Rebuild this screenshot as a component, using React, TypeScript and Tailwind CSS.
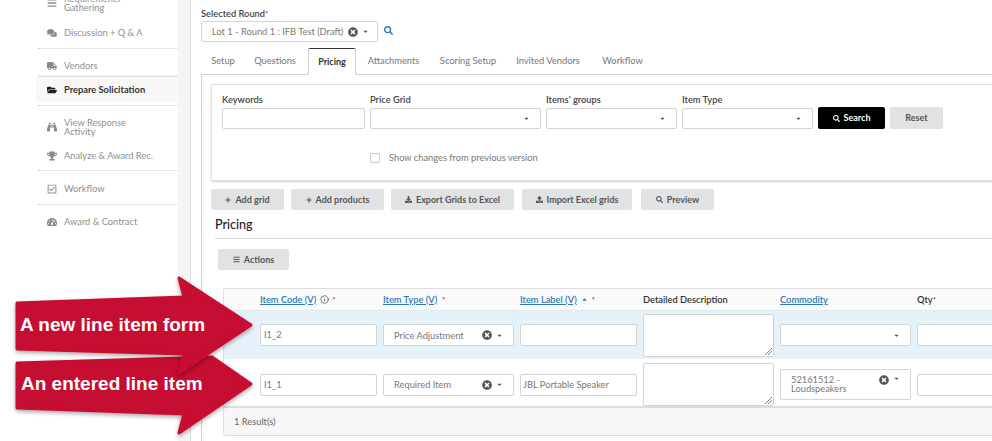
import React from "react";
import { FaBars, FaComments, FaTruck, FaFolderOpen, FaBinoculars, FaTrophy, FaRegCheckSquare, FaTachometerAlt, FaSearch, FaTimesCircle, FaCaretDown, FaDownload, FaUpload, FaPlus, FaCaretUp } from "react-icons/fa";
import { FiInfo } from "react-icons/fi";

function NavRow({ icon, text, h, active, border }: { icon: React.ReactNode; text: React.ReactNode; h: string; active?: boolean; border?: boolean }) {
  return (
    <div className={`flex items-center pl-[9px] gap-[7px] ${h} ${active ? "bg-[#f8f8f8] font-bold text-[#333] shadow-[0_-1px_2px_rgba(0,0,0,0.18)]" : "text-[#8f8f8f]"} ${border ? "border-b border-dotted border-[#cfcfcf]" : ""}`}>
      <span className={`w-[10px] flex justify-center text-[10px] ${active ? "text-[#222]" : "text-[#8a8a8a]"}`}>{icon}</span>
      <span className="leading-[9px]">{text}</span>
    </div>
  );
}

function Box({ className = "", children }: { className?: string; children?: React.ReactNode }) {
  return <div className={`bg-white border border-[#d4d4d4] rounded-[2px] shrink-0 flex items-center text-[#777] ${className}`}>{children}</div>;
}

function SelectBox({ className = "", text, clear, top }: { className?: string; text?: React.ReactNode; clear?: boolean; top?: boolean }) {
  return (
    <Box className={`${className} pl-[10px] pr-[10px] ${top ? "items-start pt-[5px]" : ""}`}>
      <span className="flex-1 leading-[9px]">{text}</span>
      {clear && <FaTimesCircle className="text-[10px] text-[#555] mr-[4px]" />}
      <FaCaretDown className="text-[7px] text-[#555]" />
    </Box>
  );
}

function Btn({ w, icon, label, className = "" }: { w: string; icon?: React.ReactNode; label: string; className?: string }) {
  return (
    <div className={`h-[21px] ${w} rounded-[2px] bg-[#e1e2e3] text-[#555] font-bold text-[9px] flex items-center justify-center gap-[4px] shrink-0 ${className}`}>
      {icon}
      <span>{label}</span>
    </div>
  );
}

function Tab({ label, w, active }: { label: string; w: string; active?: boolean }) {
  return (
    <div className={`${w} h-[26px] flex items-center justify-center shrink-0 ${active ? "border border-b-0 border-[#d0d0d0] border-t-[#333] bg-white text-[#333] font-bold text-[9px] rounded-t-[2px] relative z-10 h-[27px]" : "text-[#777]"}`}>
      {label}
    </div>
  );
}

function Link({ children }: { children: React.ReactNode }) {
  return <span className="text-[#2a7ab8] underline">{children}</span>;
}

function Star() {
  return <span className="text-[#d22] text-[8px] leading-none">*</span>;
}

function Field({ label, children, className = "" }: { label: string; children: React.ReactNode; className?: string }) {
  return (
    <div className={`flex flex-col shrink-0 ${className}`}>
      <div className="h-[23px] pt-[9px] text-[#444] font-semibold leading-[12px]">{label}</div>
      {children}
    </div>
  );
}

function Resize() {
  return (
    <svg className="absolute right-[1px] bottom-[1px]" width="8" height="8" viewBox="0 0 8 8">
      <path d="M1 8 L8 1 M4 8 L8 4" stroke="#666" strokeWidth="0.8" />
    </svg>
  );
}

export default function App() {
  return (
    <div className="relative w-[992px] h-[441px] overflow-hidden bg-white flex text-[9.3px] font-['Lato','Noto_Sans',sans-serif]">
      {/* sidebar */}
      <div className="w-[178px] shrink-0 pl-[38px] pt-0 bg-white">
        <div className="-mt-[11px] flex flex-col">
          <NavRow h="h-[28px]" icon={<FaBars />} text={<>Requirements<br />Gathering</>} />
          <NavRow h="h-[32px]" border icon={<FaComments />} text="Discussion + Q & A" />
          <NavRow h="h-[28px] pt-[5px]" icon={<FaTruck />} text="Vendors" />
          <NavRow h="h-[25px]" active icon={<FaFolderOpen />} text="Prepare Solicitation" />
          <div className="h-[4px] border-b border-dotted border-[#cfcfcf]" />
          <NavRow h="h-[39px] pt-[3px]" icon={<FaBinoculars />} text={<>View Response<br />Activity</>} />
          <NavRow h="h-[26px] pb-[4px] " border icon={<FaTrophy />} text="Analyze & Award Rec." />
          <NavRow h="h-[34px] pt-[2px]" border icon={<FaRegCheckSquare />} text="Workflow" />
          <NavRow h="h-[33px]" icon={<FaTachometerAlt />} text="Award & Contract" />
        </div>
      </div>
      <div className="w-[13px] shrink-0 bg-[#f5f5f5] border-r border-[#dcdcdc]" />

      {/* main */}
      <div className="flex-1 min-w-0 pl-[10px] pt-[8px]">
        <div className="h-[13px] leading-[12px] text-[#444] font-semibold">Selected Round<Star /></div>
        <div className="flex items-center mt-0 h-[21px]">
          <Box className="w-[177px] h-[21px] pl-[10px] pr-[8px]">
            <span className="flex-1 whitespace-nowrap">Lot 1 - Round 1 : IFB Test (Draft)</span>
            <FaTimesCircle className="text-[10px] text-[#555] mr-[4px] shrink-0" />
            <FaCaretDown className="text-[7px] text-[#555] shrink-0" />
          </Box>
          <FaSearch className="ml-[6px] -mt-[2px] text-[9px] text-[#2a7ab8]" />
        </div>

        {/* tabs */}
        <div className="mt-[6px] flex h-[26px] items-start">
          <Tab w="w-[38px] ml-[3px]" label="Setup" />
          <Tab w="w-[66px]" label="Questions" />
          <Tab w="w-[48px]" label="Pricing" active />
          <Tab w="w-[75px]" label="Attachments" />
          <Tab w="w-[74px]" label="Scoring Setup" />
          <Tab w="w-[86px]" label="Invited Vendors" />
          <Tab w="w-[63px]" label="Workflow" />
        </div>

        {/* panel */}
        <div className="w-[820px] h-[380px] border-l border-t border-[#d0d0d0] pl-[9px] pt-[9px]">
          {/* filter card */}
          <div className="w-[810px] h-[97px] border border-[#e0e0e0] rounded-[2px] shadow-[0_1px_2px_rgba(0,0,0,0.2)] pl-[10px]">
            <div className="flex items-end gap-[5px]">
              <Field label="Keywords"><Box className="w-[143px] h-[21px]" /></Field>
              <Field label="Price Grid"><SelectBox className="w-[171px] h-[21px]" /></Field>
              <Field label="Items' groups"><SelectBox className="w-[131px] h-[21px]" /></Field>
              <Field label="Item Type"><SelectBox className="w-[131px] h-[21px]" /></Field>
              <Btn w="w-[67px]" className="!bg-black !text-white !h-[22px]" icon={<FaSearch className="text-[7px]" />} label="Search" />
              <Btn w="w-[53px]" className="!h-[22px]" label="Reset" />
            </div>
            <div className="flex items-center mt-[24px] ml-[148px] h-[10px]">
              <span className="w-[10px] h-[10px] border border-[#ccc] rounded-[1px] shrink-0" />
              <span className="ml-[9px] text-[#777]">Show changes from previous version</span>
            </div>
          </div>

          {/* action buttons */}
          <div className="flex mt-[8px]">
            <Btn w="w-[73px]" icon={<FaPlus className="text-[6px]" />} label="Add grid" />
            <Btn w="w-[93px] ml-[7px]" icon={<FaPlus className="text-[6px]" />} label="Add products" />
            <Btn w="w-[123px] ml-[7px]" icon={<FaDownload className="text-[7px]" />} label="Export Grids to Excel" />
            <Btn w="w-[110px] ml-[8px]" icon={<FaUpload className="text-[7px]" />} label="Import Excel grids" />
            <Btn w="w-[73px] ml-[9px]" icon={<FaSearch className="text-[7px]" />} label="Preview" />
          </div>

          {/* pricing */}
          <div className="ml-[4px] mt-[7px] h-[22px] border-b border-[#d8d8d8] text-[12.5px] leading-[16px] text-[#222] font-medium">Pricing</div>
          <Btn w="w-[71px]" className="ml-[7px] mt-[10px]" icon={<FaBars className="text-[7px]" />} label="Actions" />

          {/* table */}
          <div className="ml-[12px] mt-[18px] w-[790px] border border-[#dedede] rounded-[2px]">
            <div className="h-[21px] bg-[#fafafa] flex items-center gap-[6px] pl-[36px] font-semibold text-[#333]">
              <div className="w-[117px] flex items-center gap-[3px]"><Link>Item Code (V)</Link><FiInfo className="text-[9px] text-[#555] ml-[1px]" /><Star /></div>
              <div className="w-[131px]"><Link>Item Type (V)</Link> &nbsp;<Star /></div>
              <div className="w-[117px] flex items-center gap-[4px]"><Link>Item Label (V)</Link><FaCaretUp className="text-[7px] text-[#2a7ab8]" /><Star /></div>
              <div className="w-[131px]">Detailed Description</div>
              <div className="w-[131px]"><Link>Commodity</Link></div>
              <div>Qty<Star /></div>
            </div>
            <div className="h-[49px] bg-[#e6f2f9] border-t border-[#e0e8ee] flex items-center gap-[6px] pl-[36px]">
              <Box className="w-[117px] h-[22px] pl-[3px]">I1_2</Box>
              <SelectBox className="w-[131px] h-[22px]" text="Price Adjustment" clear />
              <Box className="w-[117px] h-[22px]" />
              <Box className="w-[131px] h-[43px] relative"><Resize /></Box>
              <SelectBox className="w-[131px] h-[22px]" />
              <Box className="w-[131px] h-[22px]" />
            </div>
            <div className="h-[49px] bg-white flex items-center gap-[6px] pl-[36px] pt-[4px] border-b-2 border-[#dcdcdc]">
              <Box className="w-[117px] h-[22px] pl-[3px]">I1_1</Box>
              <SelectBox className="w-[131px] h-[22px]" text="Required Item" clear />
              <Box className="w-[117px] h-[22px] pl-[2px]">JBL Portable Speaker</Box>
              <Box className="w-[131px] h-[43px] relative"><Resize /></Box>
              <SelectBox className="w-[131px] h-[31px]" top text={<>52161512 -<br />Loudspeakers</>} clear />
              <Box className="w-[131px] h-[22px]" />
            </div>
            <div className="h-[27px] bg-[#f7f7f7] flex items-center pl-[10px] text-[#666]">1 Result(s)</div>
          </div>
        </div>
      </div>

      {/* callout arrows drawn over the page */}
      <svg className="absolute left-0 top-0 pointer-events-none" width="300" height="441" viewBox="0 0 300 441">
        <defs>
          <filter id="sh" x="-10%" y="-10%" width="120%" height="130%">
            <feDropShadow dx="0" dy="2" stdDeviation="2" floodColor="#000" floodOpacity="0.35" />
          </filter>
        </defs>
        <path d="M17 363 L183 358 L212 357 L251 384 L179 433 L184 414 L17 408 Z" fill="#c60c30" stroke="#c60c30" strokeWidth="3" strokeLinejoin="round" filter="url(#sh)" />
        <path d="M17 303 L184 297 L179 278 L251 325 L179 373 L184 354 L17 349 Z" fill="#c60c30" stroke="#c60c30" strokeWidth="3" strokeLinejoin="round" filter="url(#sh)" />
      </svg>
      <div className="absolute left-[20px] top-[314px] text-white font-bold text-[19px] leading-[22px] font-['Liberation_Sans',Arial,sans-serif]">A new line item form</div>
      <div className="absolute left-[21px] top-[373px] text-white font-bold text-[19px] leading-[22px] font-['Liberation_Sans',Arial,sans-serif]">An entered line item</div>
    </div>
  );
}
